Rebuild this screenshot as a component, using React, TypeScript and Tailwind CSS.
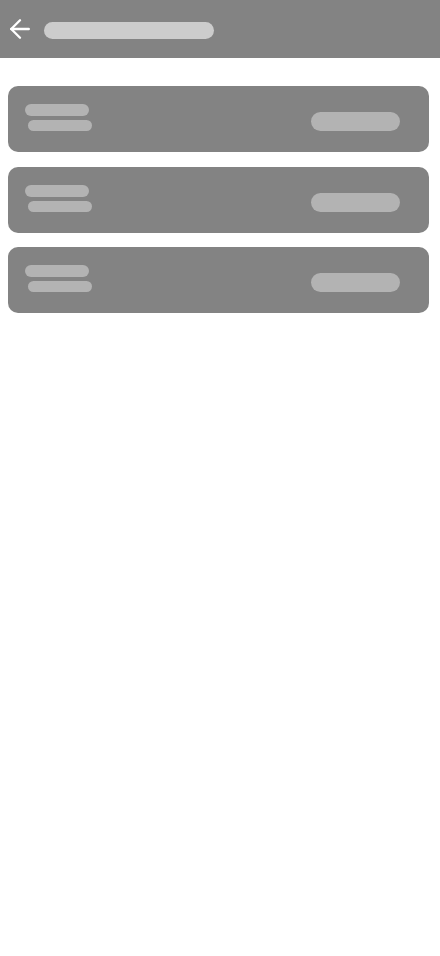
import React from 'react';
import { ArrowLeft } from 'lucide-react';

const SkeletonCard: React.FC = () => (
  <div className="flex h-[66px] justify-between rounded-[10px] bg-[#838383] pl-[17px] pr-[29px] pt-[18px]">
    <div className="flex flex-col gap-[4px]">
      <div className="h-[12px] w-[64px] rounded-full bg-[#b3b3b3]" />
      <div className="ml-[3px] h-[11px] w-[64px] rounded-full bg-[#b3b3b3]" />
    </div>
    <div className="mt-[8px] h-[19px] w-[89px] rounded-full bg-[#b3b3b3]" />
  </div>
);

export default function App() {
  return (
    <div className="min-h-[956px] w-full bg-white" style={{ fontFamily: 'Roboto, "Liberation Sans", sans-serif' }}>
      {/* Header */}
      <div className="flex h-[58px] items-center bg-[#838383] pl-[5px]">
        <ArrowLeft size={30} strokeWidth={1.9} className="text-white" />
        <div className="ml-[9px] mt-[3px] h-[17px] w-[170px] rounded-full bg-[#cccccc]" />
      </div>

      {/* Cards */}
      <div className="flex flex-col gap-[14.5px] pl-[8px] pr-[11px] pt-[28px]">
        <SkeletonCard />
        <SkeletonCard />
        <SkeletonCard />
      </div>
    </div>
  );
}
